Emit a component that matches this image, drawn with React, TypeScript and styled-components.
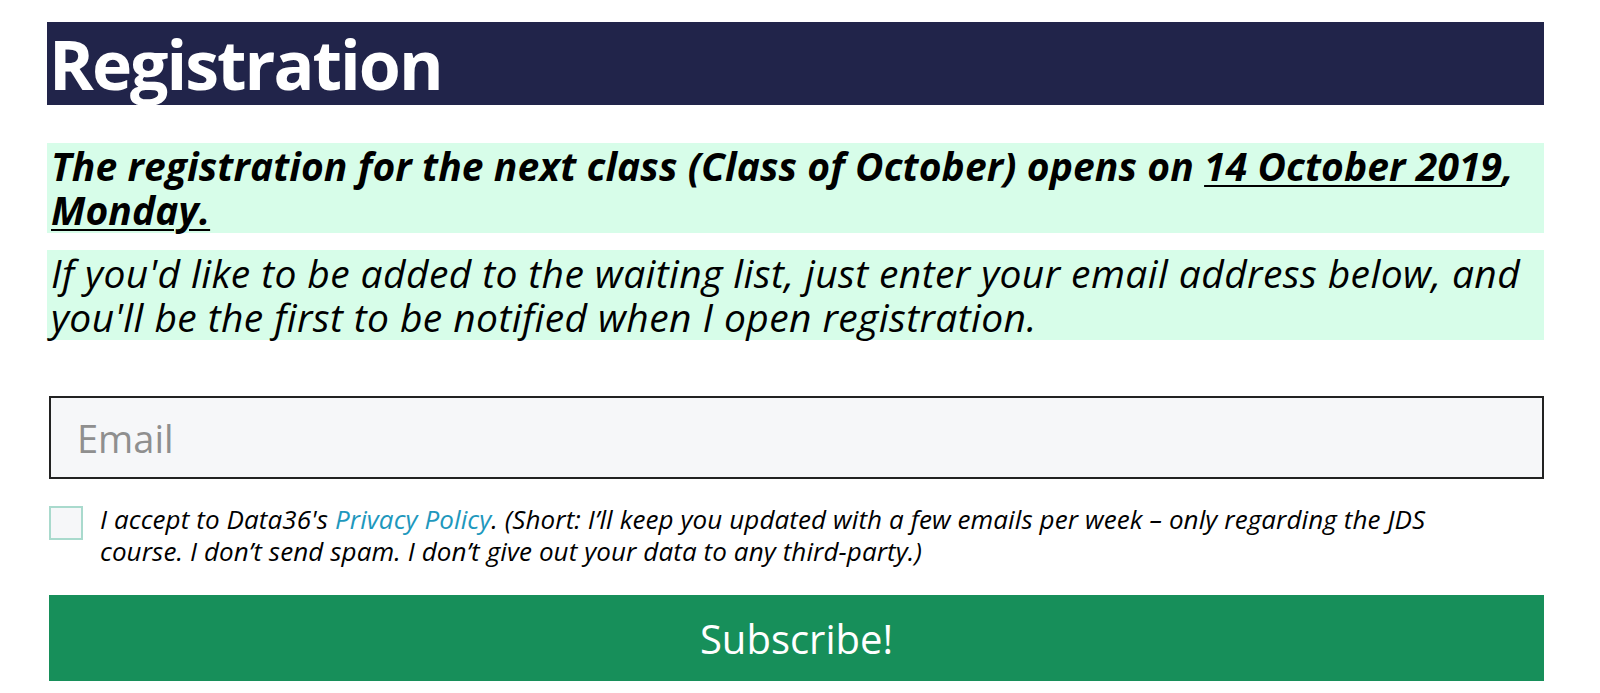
import styled, { createGlobalStyle } from 'styled-components';

const GlobalStyle = createGlobalStyle`
  body {
    margin: 0;
    background: #ffffff;
    font-family: "Open Sans", "DejaVu Sans", sans-serif;
    color: #000000;
  }
`;

const App = () => {
  return (
    <Page>
      <GlobalStyle />
      <Header>
        <Title>Registration</Title>
      </Header>
      <Notice bold>
        The registration for the next class (Class of October) opens on{' '}
        <u>14 October 2019</u>, <u>Monday.</u>
      </Notice>
      <Notice>
        If you'd like to be added to the waiting list, just enter your email
        address below, and you'll be the first to be notified when I open
        registration.
      </Notice>
      <Form>
        <EmailInput type="email" placeholder="Email" />
        <Consent>
          <Checkbox type="checkbox" />
          <ConsentText>
            I accept to Data36's <PolicyLink href="#">Privacy Policy</PolicyLink>.
            (Short: I’ll keep you updated with a few emails per week – only
            regarding the JDS course. I don’t send spam. I don’t give out your
            data to any third-party.)
          </ConsentText>
        </Consent>
        <SubmitButton type="button">Subscribe!</SubmitButton>
      </Form>
    </Page>
  );
};

export default App;

const Page = styled.div`
  width: 1497px;
  margin: 22px 0 0 47px;
  display: flex;
  flex-direction: column;
`;

const Header = styled.div`
  background: #21244a;
  height: 83px;
  display: flex;
  align-items: center;
`;

const Title = styled.h1`
  margin: 0;
  padding-left: 2px;
  color: #ffffff;
  font-size: 68px;
  font-weight: 700;
  letter-spacing: -2px;
  line-height: 83px;
`;

const Notice = styled.p<{ bold?: boolean }>`
  margin: ${(p) => (p.bold ? '38px' : '17px')} 0 0;
  padding: 1px 4px;
  background: #d7fde9;
  font-size: 39px;
  line-height: 44px;
  letter-spacing: ${(p) => (p.bold ? '0.1px' : '0.4px')};
  font-style: italic;
  font-weight: ${(p) => (p.bold ? 700 : 400)};

  u {
    text-decoration-thickness: 2px;
    text-underline-offset: 4px;
  }
`;

const Form = styled.form`
  margin-top: 56px;
  display: flex;
  flex-direction: column;
`;

const EmailInput = styled.input`
  box-sizing: border-box;
  height: 83px;
  margin-left: 2px;
  border: 2px solid #222222;
  background: #f6f7f9;
  padding: 0 26px;
  font-family: "Open Sans", sans-serif;
  font-size: 38px;
  outline: none;

  &::placeholder {
    color: #8f8f8f;
  }
`;

const Consent = styled.label`
  margin-top: 27px;
  display: flex;
  align-items: flex-start;
  gap: 17px;
`;

const Checkbox = styled.input`
  appearance: none;
  flex: none;
  box-sizing: border-box;
  width: 34px;
  height: 34px;
  margin: 0 0 0 2px;
  border: 2px solid #a9dacd;
  background: #f6f7f9;
`;

const ConsentText = styled.span`
  font-size: 26px;
  line-height: 32px;
  letter-spacing: 0.1px;
  font-style: italic;
  margin-top: -3px;
  padding-right: 40px;
`;

const PolicyLink = styled.a`
  color: #1e98bd;
  text-decoration: none;
`;

const SubmitButton = styled.button`
  margin: 28px 0 0 2px;
  height: 86px;
  border: none;
  background: #178f5a;
  color: #ffffff;
  font-family: "Open Sans", sans-serif;
  font-size: 40px;
  cursor: pointer;
`;
